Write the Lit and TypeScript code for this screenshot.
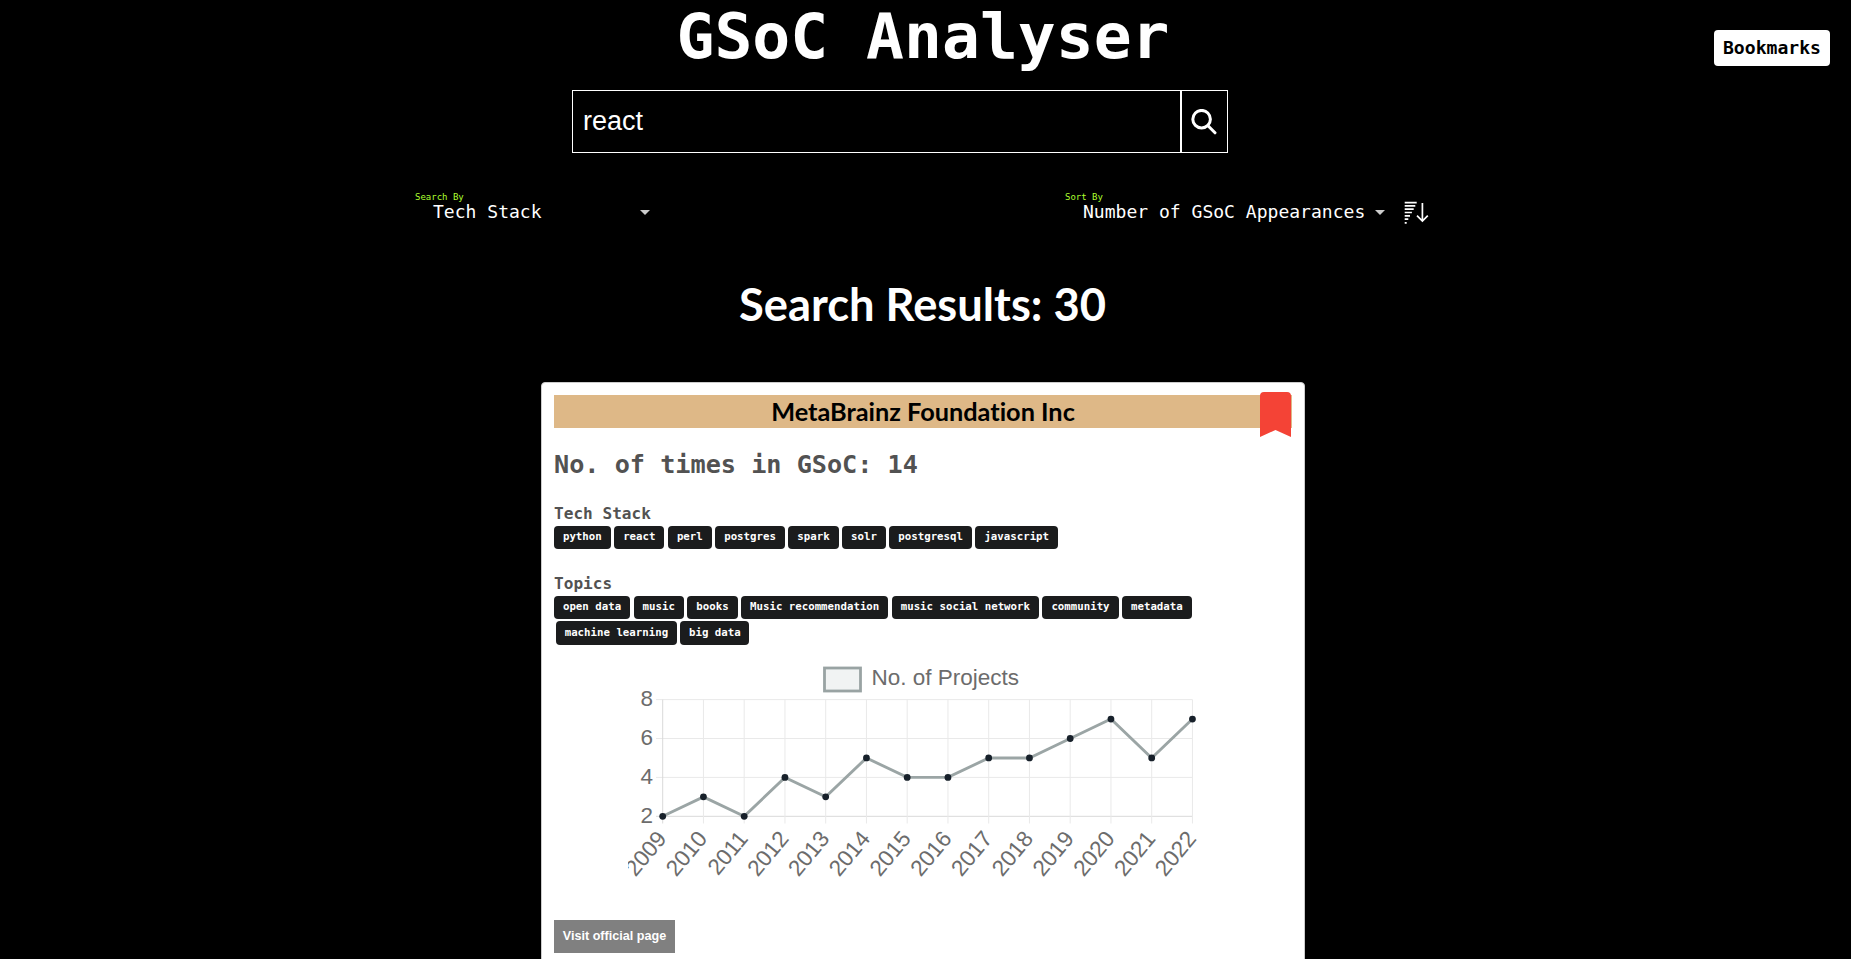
import { LitElement, html, svg, css } from "lit";
import { customElement } from "lit/decorators.js";

const tech = ["python", "react", "perl", "postgres", "spark", "solr", "postgresql", "javascript"];
const topicRows = [
  ["open data", "music", "books", "Music recommendation", "music social network", "community", "metadata"],
  ["machine learning", "big data"],
];
const counts = [2, 3, 2, 4, 3, 5, 4, 4, 5, 5, 6, 7, 5, 7];

@customElement("project-chart")
class ProjectChart extends LitElement {
  static styles = css`
    :host { display: block; width: 600px; height: 225px; }
    svg { display: block; }
    text { font-family: "Liberation Sans", Arial, sans-serif; font-size: 22.5px; fill: #6c6c6c; }
  `;
  render() {
    const x = (i: number) => 34.7 + i * 40.75;
    const y = (v: number) => 160.3 - (v - 2) * 19.45;
    return html`<svg width="600" height="225" viewBox="0 0 600 225">
      <rect x="196.5" y="12" width="36" height="23" fill="#f1f3f3" stroke="#99a3a3" stroke-width="2.8" />
      <text x="243.5" y="28.9">No. of Projects</text>
      ${[2, 4, 6, 8].map((v) => svg`
        <line x1="28" x2="564.5" y1=${y(v)} y2=${y(v)} stroke=${v === 2 ? "#d9d9d9" : "#e9e9e9"} />
        <text x="25" y=${y(v) + 6.3} text-anchor="end">${v}</text>`)}
      ${counts.map((_, i) => svg`
        <line x1=${x(i)} x2=${x(i)} y1="43.6" y2="167.5" stroke=${i === 0 ? "#d9d9d9" : "#e9e9e9"} />
        <text transform="translate(${x(i) - 3.5} 176.2) rotate(-50)" x="0" y="11" text-anchor="end">${2009 + i}</text>`)}
      <polyline points=${counts.map((v, i) => `${x(i)},${y(v)}`).join(" ")} fill="none" stroke="#9ba5a5" stroke-width="2.9" />
      ${counts.map((v, i) => svg`<circle cx=${x(i)} cy=${y(v)} r="3.4" fill="#17202a" />`)}
    </svg>`;
  }
}

@customElement("app-root")
class AppRoot extends LitElement {
  static styles = css`
    :host {
      display: block; height: 959px; overflow: hidden; background: #000; color: #fff;
      font-family: "DejaVu Sans Mono", monospace; position: relative;
    }
    * { box-sizing: border-box; }
    h1, h2, h3, h4 { margin: 0; }
    .title { font-size: 63px; line-height: 73px; text-align: center; height: 74px; padding-right: 5px; }
    .bookmarks {
      position: absolute; right: 21px; top: 30px; width: 116px; height: 36px; padding: 0;
      border: 0; border-radius: 4px; background: #fff; color: #000;
      font: bold 18.1px/36px "DejaVu Sans Mono", monospace; text-align: center;
    }
    .search { display: flex; width: 656px; height: 63px; margin: 16px 0 0 572px; }
    .field {
      width: 609px; height: 63px; border: 1px solid #fff; background: #000; color: #fff; padding: 0 10px;
      font-family: "Liberation Sans", Arial, sans-serif; font-size: 27px; border-radius: 0; outline: none;
    }
    .go { width: 47px; border: 1px solid #fff; background: #000; padding: 0 1px 0 0; display: flex; align-items: center; justify-content: center; }
    .filters { display: flex; height: 40px; margin: 39px 0 0 415px; }
    .pick { width: 235px; }
    .pick.sort { margin-left: 415px; width: 320px; }
    .label { font-size: 9px; line-height: 10px; color: #adff2f; }
    .choice { display: flex; align-items: center; justify-content: space-between; padding-left: 18px; font-size: 18.05px; line-height: 20px; white-space: nowrap; }
    .caret { width: 0; border: 5px solid transparent; border-top-color: #ccc; border-bottom: 0; }
    .order { margin: 8px 0 0 19px; }
    .results { font: bold 45.3px/56px Lato, sans-serif; text-align: center; margin-top: 44px; padding-right: 6px; }
    .card { width: 764px; height: 620px; margin: 50px 0 0 541px; background: #fff; border: 1px solid #ccc; border-radius: 4px; padding: 12px; position: relative; color: #525252; }
    .name { height: 33px; background: #deb887; color: #000; font: bold 25.3px/33px Lato, sans-serif; font-variant-ligatures: none; text-align: center; }
    .ribbon { position: absolute; right: 13px; top: 9px; }
    .times { font-size: 25.2px; line-height: 30px; margin-top: 22px; }
    .group { font-size: 16.1px; line-height: 20px; margin-top: 24px; }
    .topics { margin-top: 25px; }
    .tags { display: flex; gap: 3.55px; height: 23px; margin-top: 2px; }
    .tags.next { margin: 2px 0 0 2px; height: 24px; }
    .tags.next .tag { line-height: 23px; padding: 0 8.7px; }
    .tag { padding: 0 8.95px; border-radius: 4px; background: #1b1c1d; color: #fff; font-size: 10.74px; line-height: 21px; font-weight: bold; white-space: pre; }
    .chart { margin: 11px 0 0 74px; }
    .visit { display: block; margin-top: 39px; width: 121px; height: 33px; background: #808080; color: #fff; font: bold 12.6px/32px "Liberation Sans", Arial, sans-serif; text-align: center; }
  `;
  tags(list: string[]) { return list.map((t) => html`<span class="tag">${t}</span>`); }
  render() {
    return html`
      <h1 class="title">GSoC Analyser</h1>
      <button class="bookmarks">Bookmarks</button>
      <div class="search">
        <input class="field" .value=${"react"} />
        <button class="go"><svg width="26" height="26" viewBox="0 0 26 26" fill="none" stroke="#fff" stroke-width="3" stroke-linecap="round"><circle cx="10.6" cy="10.2" r="8.8" /><path d="M17 16.8L24 23.8" /></svg></button>
      </div>
      <div class="filters">
        <div class="pick"><div class="label">Search By</div><div class="choice">Tech Stack<i class="caret"></i></div></div>
        <div class="pick sort"><div class="label">Sort By</div><div class="choice">Number of GSoC Appearances<i class="caret"></i></div></div>
        <svg class="order" width="26" height="26" viewBox="0 0 26 26" fill="none" stroke="#fff" stroke-width="1.7"><path d="M.7 2.6H12.7M.7 5.9H11.3M.7 9.2H9.7M.7 12.5H7.9M.7 15.8H6M.7 19.1H4.3M.7 22.8H2.7M18.4 3V21M13 15.6L18.4 21L23.8 15.6" /></svg>
      </div>
      <h2 class="results">Search Results: 30</h2>
      <section class="card">
        <h3 class="name">MetaBrainz Foundation Inc</h3>
        <svg class="ribbon" width="31" height="45" viewBox="0 0 31 45"><path d="M0 45V4Q0 0 4 0H27Q31 0 31 4V45L15.5 38Z" fill="#f44336" /></svg>
        <h3 class="times">No. of times in GSoC: 14</h3>
        <h4 class="group">Tech Stack</h4>
        <div class="tags">${this.tags(tech)}</div>
        <h4 class="group topics">Topics</h4>
        <div class="tags">${this.tags(topicRows[0])}</div>
        <div class="tags next">${this.tags(topicRows[1])}</div>
        <project-chart class="chart"></project-chart>
        <a class="visit">Visit official page</a>
      </section>`;
  }
}
